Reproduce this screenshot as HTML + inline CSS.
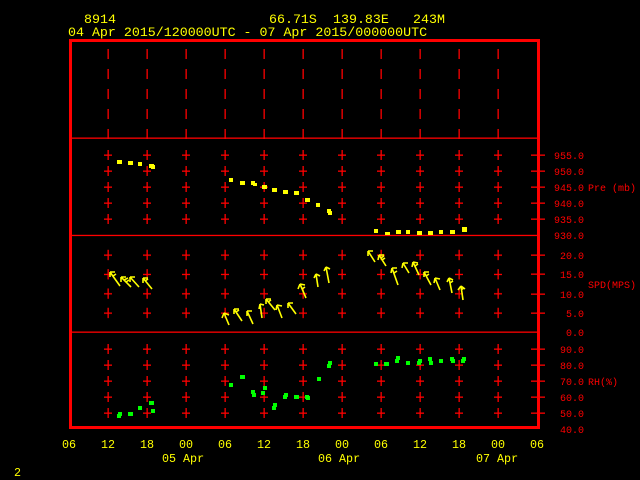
<!DOCTYPE html>
<html><head><meta charset="utf-8"><style>
html,body{margin:0;padding:0;background:#000;width:640px;height:480px;overflow:hidden}
svg{display:block}
text{font-family:"Liberation Mono",monospace}
</style></head><body>
<svg width="640" height="480" viewBox="0 0 640 480" xmlns="http://www.w3.org/2000/svg">
<defs>
<pattern id="dash" patternUnits="userSpaceOnUse" x="88.5" y="49" width="39" height="20">
<rect x="19" y="0" width="1.3" height="10" fill="#f00"/>
</pattern>
<pattern id="crossP" patternUnits="userSpaceOnUse" x="88.5" y="147" width="39" height="16">
<rect x="19" y="3" width="1.3" height="10" fill="#f00"/>
<rect x="15.5" y="7.5" width="8" height="1.3" fill="#f00"/>
</pattern>
<pattern id="crossS" patternUnits="userSpaceOnUse" x="88.5" y="245.3" width="39" height="19.33">
<rect x="19" y="4.5" width="1.3" height="10.3" fill="#f00"/>
<rect x="15.5" y="9.2" width="8" height="1.3" fill="#f00"/>
</pattern>
<pattern id="crossR" patternUnits="userSpaceOnUse" x="88.5" y="341" width="39" height="16">
<rect x="19" y="3" width="1.3" height="10" fill="#f00"/>
<rect x="15.5" y="7.5" width="8" height="1.3" fill="#f00"/>
</pattern>
</defs>

<g fill="#ff0" font-size="13.3">
<text x="84" y="23">8914</text>
<text x="269" y="23">66.71S</text>
<text x="333" y="23">139.83E</text>
<text x="413" y="23">243M</text>
<text x="68" y="36">04 Apr 2015/120000UTC - 07 Apr 2015/000000UTC</text>
</g>

<rect x="88" y="49" width="430" height="90" fill="url(#dash)"/>
<rect x="88" y="147" width="430" height="80" fill="url(#crossP)"/>
<rect x="88" y="245.3" width="430" height="77.3" fill="url(#crossS)"/>
<rect x="88" y="341" width="430" height="80" fill="url(#crossR)"/>

<rect x="70" y="137.5" width="469" height="1.3" fill="#f00"/>
<rect x="70" y="234.8" width="469" height="1.3" fill="#f00"/>
<rect x="70" y="331.5" width="469" height="1.3" fill="#f00"/>

<rect x="70.5" y="40.5" width="468" height="387" fill="none" stroke="#f00" stroke-width="3"/>

<g fill="#f00">
<rect x="531" y="154.5" width="14" height="1.3"/><rect x="531" y="170.5" width="14" height="1.3"/>
<rect x="531" y="186.5" width="14" height="1.3"/><rect x="531" y="202.5" width="14" height="1.3"/>
<rect x="531" y="218.5" width="14" height="1.3"/>
<rect x="531" y="254.5" width="14" height="1.3"/><rect x="531" y="273.5" width="14" height="1.3"/>
<rect x="531" y="293.5" width="14" height="1.3"/><rect x="531" y="312.5" width="14" height="1.3"/>
<rect x="531" y="348.5" width="14" height="1.3"/><rect x="531" y="364.5" width="14" height="1.3"/>
<rect x="531" y="380.5" width="14" height="1.3"/><rect x="531" y="396.5" width="14" height="1.3"/>
<rect x="531" y="412.5" width="14" height="1.3"/>
</g>

<g fill="#f00" font-size="10" text-anchor="end">
<text x="584" y="159">955.0</text><text x="584" y="175">950.0</text>
<text x="584" y="191">945.0</text><text x="584" y="207">940.0</text>
<text x="584" y="223">935.0</text><text x="584" y="239">930.0</text>
<text x="584" y="259">20.0</text><text x="584" y="278">15.0</text>
<text x="584" y="298">10.0</text><text x="584" y="317">5.0</text>
<text x="584" y="336">0.0</text>
<text x="584" y="353">90.0</text><text x="584" y="369">80.0</text>
<text x="584" y="385">70.0</text><text x="584" y="401">60.0</text>
<text x="584" y="417">50.0</text><text x="584" y="433">40.0</text>
</g>
<g fill="#f00" font-size="10">
<text x="588" y="191">Pre (mb)</text>
<text x="588" y="288">SPD(MPS)</text>
<text x="588" y="385">RH(%)</text>
</g>

<g fill="#ff0" font-size="11.7" text-anchor="middle">
<text x="69" y="448">06</text><text x="108" y="448">12</text><text x="147" y="448">18</text>
<text x="186" y="448">00</text><text x="225" y="448">06</text><text x="264" y="448">12</text>
<text x="303" y="448">18</text><text x="342" y="448">00</text><text x="381" y="448">06</text>
<text x="420" y="448">12</text><text x="459" y="448">18</text><text x="498" y="448">00</text>
<text x="537" y="448">06</text>
</g>
<g fill="#ff0" font-size="11.7">
<text x="162" y="462">05 Apr</text>
<text x="318" y="462">06 Apr</text>
<text x="476" y="462">07 Apr</text>
<text x="14" y="476">2</text>
</g>

<g fill="#ff0">
<rect x="117" y="160" width="5" height="4"/><rect x="128" y="161" width="5" height="4"/>
<rect x="138" y="162" width="4" height="4"/><rect x="149" y="164" width="5" height="4"/>
<rect x="151" y="165" width="4" height="4"/>
<rect x="229" y="178" width="4" height="4"/><rect x="240" y="181" width="5" height="4"/>
<rect x="251" y="181" width="4" height="4"/><rect x="253" y="183" width="4" height="3"/>
<rect x="262" y="185" width="5" height="4"/><rect x="272" y="188" width="5" height="4"/>
<rect x="283" y="190" width="5" height="4"/><rect x="294" y="191" width="5" height="4"/>
<rect x="305" y="198" width="5" height="4"/><rect x="316" y="203" width="4" height="4"/>
<rect x="327" y="209" width="4" height="4"/><rect x="328" y="211" width="4" height="4"/>
<rect x="374" y="229" width="4" height="4"/><rect x="385" y="232" width="5" height="3"/>
<rect x="396" y="230" width="5" height="4"/><rect x="406" y="230" width="4" height="4"/>
<rect x="417" y="231" width="5" height="4"/><rect x="428" y="231" width="5" height="4"/>
<rect x="439" y="230" width="4" height="4"/><rect x="450" y="230" width="5" height="4"/>
<rect x="462" y="227" width="5" height="5"/>
</g>

<g fill="#0f0">
<rect x="117" y="414" width="4" height="4"/><rect x="118" y="412" width="4" height="4"/>
<rect x="128" y="412" width="5" height="4"/><rect x="138" y="406" width="4" height="4"/>
<rect x="149" y="401" width="5" height="4"/><rect x="151" y="409" width="4" height="4"/>
<rect x="229" y="383" width="4" height="4"/><rect x="240" y="375" width="5" height="4"/>
<rect x="251" y="390" width="4" height="4"/><rect x="252" y="393" width="4" height="4"/>
<rect x="261" y="391" width="4" height="4"/><rect x="263" y="386" width="4" height="4"/>
<rect x="272" y="406" width="4" height="4"/><rect x="273" y="403" width="4" height="4"/>
<rect x="283" y="395" width="4" height="4"/><rect x="284" y="393" width="4" height="4"/>
<rect x="294" y="395" width="5" height="4"/><rect x="305" y="395" width="4" height="4"/>
<rect x="306" y="396" width="4" height="4"/><rect x="317" y="377" width="4" height="4"/>
<rect x="327" y="364" width="4" height="4"/><rect x="328" y="361" width="4" height="4"/>
<rect x="374" y="362" width="4" height="4"/><rect x="384" y="362" width="5" height="4"/>
<rect x="395" y="359" width="4" height="4"/><rect x="396" y="356" width="4" height="4"/>
<rect x="406" y="361" width="4" height="4"/><rect x="417" y="361" width="4" height="4"/>
<rect x="418" y="359" width="4" height="4"/><rect x="428" y="357" width="4" height="4"/>
<rect x="429" y="361" width="4" height="4"/><rect x="439" y="359" width="4" height="4"/>
<rect x="450" y="357" width="4" height="4"/><rect x="451" y="359" width="4" height="4"/>
<rect x="461" y="359" width="4" height="4"/><rect x="462" y="357" width="4" height="4"/>
</g>

<g stroke="#ff0" stroke-width="1.6" fill="none">
<path d="M110 272 L120 286 M110 272 l0 5 M110 272 l5 0 M113 276 l3 -2"/>
<path d="M121 277 L131 287 M121 277 l0 5 M121 277 l5 0 M124 280 l4 -2 M126 282 l3 -2"/>
<path d="M130 277 L139 287 M130 277 l0 5 M130 277 l5 0"/>
<path d="M143 278 L152 289 M143 278 l0 5 M143 278 l5 0 M145 281 l3 -2"/>
<path d="M224 313 L229 325 M224 313 l-2 5 M224 313 l5 2"/>
<path d="M234 309 L242 321 M234 309 l0 5 M234 309 l5 0 M236 312 l3 -2"/>
<path d="M247 311 L253 324 M247 311 l0 5 M247 311 l5 0"/>
<path d="M260 304 L262 318 M260 304 l-1 5 M260 304 l4 1"/>
<path d="M266 299 L275 310 M266 299 l0 5 M266 299 l5 0 M268 302 l3 -2"/>
<path d="M277 305 L282 318 M277 305 l-1 5 M277 305 l5 1"/>
<path d="M288 303 L296 314 M288 303 l0 5 M288 303 l5 0"/>
<path d="M300 284 L306 298 M300 284 l-2 5 M300 284 l5 1 M302 289 l3 -2"/>
<path d="M316 274 L318 287 M316 274 l-2 4 M316 274 l4 2"/>
<path d="M326 267 L329 283 M326 267 l-2 4 M326 267 l4 2"/>
<path d="M368 251 L375 262 M368 251 l0 5 M368 251 l5 0"/>
<path d="M379 255 L386 266 M379 255 l-1 5 M379 255 l5 0 M381 258 l3 -2 M382 260 l3 -2"/>
<path d="M392 268 L398 285 M392 268 l-1 5 M392 268 l5 0 M394 273 l3 -2"/>
<path d="M403 263 L409 273 M403 263 l-1 5 M403 263 l5 0"/>
<path d="M413 262 L419 275 M413 262 l-1 5 M413 262 l5 1 M415 266 l3 -2"/>
<path d="M424 272 L431 285 M424 272 l0 5 M424 272 l5 0 M426 276 l3 -2"/>
<path d="M435 278 L440 290 M435 278 l-1 5 M435 278 l5 1"/>
<path d="M449 278 L452 293 M449 278 l-2 4 M449 278 l4 2 M450 283 l3 -2"/>
<path d="M461 286 L463 300 M461 286 l-3 4 M461 286 l4 3 M461 290 l3 -2"/>
</g>
</svg>
</body></html>
